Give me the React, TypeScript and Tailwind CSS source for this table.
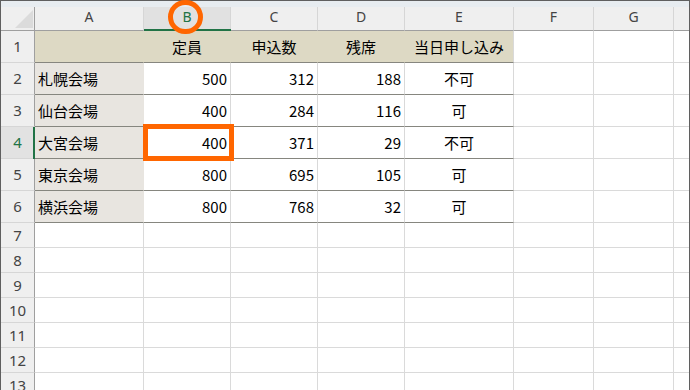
import React from "react";

type Val = string | number;

const COLS = ["A", "B", "C", "D", "E", "F", "G", ""];

const TABLE: Val[][] = [
  ["", "定員", "申込数", "残席", "当日申し込み"],
  ["札幌会場", 500, 312, 188, "不可"],
  ["仙台会場", 400, 284, 116, "可"],
  ["大宮会場", 400, 371, 29, "不可"],
  ["東京会場", 800, 695, 105, "可"],
  ["横浜会場", 800, 768, 32, "可"],
];

const EMPTY_ROWS = [7, 8, 9, 10, 11, 12, 13];

function RowHeader({ n, active, h }: { n: number; active?: boolean; h: string }) {
  return (
    <div
      className={`${h} flex items-center justify-center border-r border-b border-r-[#9f9f9f] border-b-[#d6d6d6] font-['Noto_Sans',sans-serif] text-[15px] leading-none relative ${
        active ? "bg-[#e2e2e2] text-[#217346]" : "bg-[#efefef] text-[#444]"
      }`}
    >
      {n}
      {active && <div className="absolute right-[-1px] top-0 bottom-[-1px] w-[2px] bg-[#217346]" />}
    </div>
  );
}

function DataCell({ v, row, col }: { v: Val; row: number; col: number }) {
  const head = row === 0;
  const first = col === 0;
  let cls = "h-[32px] flex items-center px-[3px] border-r border-b border-b-[#86867f] text-[15px] leading-none text-black ";
  if (head) cls += "bg-[#ddd9c4] justify-center " + (col === 4 ? "border-r-[#d9d9d9]" : "border-r-[#ddd9c4]");
  else if (first) cls += "bg-[#e8e5e0] border-r-[#e8e5e0] justify-start";
  else if (col === 4) cls += "bg-white border-r-[#d9d9d9] justify-center";
  else cls += "bg-white border-r-[#d9d9d9] justify-end";
  return <div className={cls}>{v}</div>;
}

function Blank({ h }: { h: string }) {
  return <div className={`${h} bg-white border-r border-b border-[#dadada]`} />;
}

export default function App() {
  return (
    <div className="relative w-[690px] h-[390px] overflow-hidden bg-white font-['Noto_Sans_CJK_JP',sans-serif]">
      <div className="w-full h-full border border-[#5f5f5f] flex flex-col">
        <div className="h-[6px] bg-[#e7ecf0] shrink-0" />
        <div className="grid grid-cols-[34px_109px_87px_87px_87px_109px_80px_80px_1fr]">
          {/* column headers */}
          <div className="h-[24px] bg-[#efefef] border-r border-b border-[#9f9f9f] relative">
            <svg className="absolute left-[13px] top-[3px]" width="19" height="18" viewBox="0 0 19 18">
              <polygon points="19,0 19,18 1,18" fill="#dbdbdb" />
            </svg>
          </div>
          {COLS.map((c, i) => (
            <div
              key={c + i}
              className={`h-[24px] relative flex items-center justify-center pb-[3px] border-b border-b-[#9f9f9f] font-['Noto_Sans',sans-serif] text-[14px] leading-none ${
                i < 7 ? "border-r border-r-[#d6d6d6]" : ""
              } ${i === 1 ? "bg-[#e1e1e1] text-[#217346]" : "bg-[#efefef] text-[#444]"}`}
            >
              {c}
              {i === 1 && <div className="absolute left-0 right-[-1px] bottom-[-1px] h-[2px] bg-[#217346]" />}
            </div>
          ))}

          {/* data rows */}
          {TABLE.map((r, ri) => (
            <React.Fragment key={ri}>
              <RowHeader n={ri + 1} active={ri === 3} h="h-[32px]" />
              {r.map((v, ci) => (
                <DataCell key={ci} v={v} row={ri} col={ci} />
              ))}
              <Blank h="h-[32px]" />
              <Blank h="h-[32px]" />
              <div className="h-[32px] bg-white border-b border-[#dadada]" />
            </React.Fragment>
          ))}

          {/* empty rows */}
          {EMPTY_ROWS.map((n) => (
            <React.Fragment key={n}>
              <RowHeader n={n} h="h-[25px]" />
              {[0, 1, 2, 3, 4, 5, 6].map((k) => (
                <Blank key={k} h="h-[25px]" />
              ))}
              <div className="h-[25px] bg-white border-b border-[#dadada]" />
            </React.Fragment>
          ))}
        </div>
      </div>

      {/* annotations */}
      <div className="absolute left-[168px] top-[0px] w-[35px] h-[34px] rounded-full border-[5px] border-[#ff6600]" />
      <div className="absolute left-[143px] top-[124px] w-[91px] h-[37px] border-[5px] border-[#ff6600]" />
    </div>
  );
}
